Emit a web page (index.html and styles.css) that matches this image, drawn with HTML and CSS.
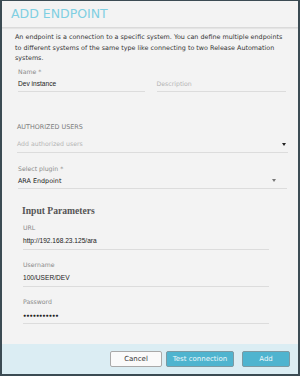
FILE: index.html
```html
<!DOCTYPE html>
<html lang="en">
<head>
    <meta charset="UTF-8">
    <title>Add Endpoint</title>
    <link rel="stylesheet" href="styles.css">
</head>
<body>
    <div class="dialog">
        <div class="dialog-header">ADD ENDPOINT</div>

        <div class="dialog-body">
            <p class="intro">An endpoint is a connection to a specific system. You can define multiple endpoints to different systems of the same type like connecting to two Release Automation systems.</p>

            <div class="row">
                <div class="field name">
                    <div class="label">Name *</div>
                    <div class="value">Dev instance</div>
                </div>
                <div class="field desc">
                    <div class="label"></div>
                    <div class="value placeholder">Description</div>
                </div>
            </div>

            <div class="section-title">AUTHORIZED USERS</div>
            <div class="field select wide">
                <div class="value placeholder">Add authorized users</div>
                <span class="caret dark"></span>
            </div>

            <div class="field select plugin">
                <div class="label">Select plugin *</div>
                <div class="value strong">ARA Endpoint</div>
                <span class="caret"></span>
            </div>

            <div class="params">
                <h3>Input Parameters</h3>
                <div class="field">
                    <div class="label">URL</div>
                    <div class="value">http://192.168.23.125/ara</div>
                </div>
                <div class="field">
                    <div class="label">Username</div>
                    <div class="value">100/USER/DEV</div>
                </div>
                <div class="field">
                    <div class="label">Password</div>
                    <div class="value dots">&#9679;&#9679;&#9679;&#9679;&#9679;&#9679;&#9679;&#9679;&#9679;&#9679;&#9679;</div>
                </div>
            </div>
        </div>

        <div class="dialog-footer">
            <button class="btn btn-cancel">Cancel</button>
            <button class="btn btn-primary">Test connection</button>
            <button class="btn btn-primary btn-add">Add</button>
        </div>
    </div>
</body>
</html>
```

FILE: styles.css
```css
html, body {
    margin: 0;
    padding: 0;
}
body {
    width: 300px;
    height: 376px;
    background: #3b4b53;
    font-family: "DejaVu Sans", Verdana, sans-serif;
    color: #333;
}
.dialog {
    box-sizing: border-box;
    width: 300px;
    height: 376px;
    border: 2px solid #3b4b53;
    border-top-width: 1px;
    background: #f3f3f3;
    display: flex;
    flex-direction: column;
}
.dialog-header {
    height: 26px;
    line-height: 26px;
    padding-left: 9px;
    font-family: "DejaVu Sans", Verdana, sans-serif;
    font-size: 12.5px;
    color: #7fcfe2;
    border-bottom: 1px solid #dadada;
    box-shadow: 0 1px 1px rgba(0, 0, 0, 0.06);
}
.dialog-body {
    flex: 1;
    padding: 4px 12px 0 13px;
}
.intro {
    margin: 0;
    font-size: 6.4px;
    line-height: 10.5px;
    color: #333;
}
.row {
    display: flex;
    gap: 12px;
    margin-top: 3px;
    padding-left: 3px;
}
.name {
    width: 127px;
}
.desc {
    width: 130px;
}
.field {
    position: relative;
    border-bottom: 1px solid #dcdcdc;
    padding-bottom: 2px;
}
.label {
    height: 12px;
    font-size: 6.2px;
    line-height: 9px;
    color: #8a8a8a;
}
.value {
    font-family: "Liberation Sans", Arial, sans-serif;
    font-size: 6.6px;
    line-height: 10px;
    color: #222;
}
.value.placeholder {
    font-family: "DejaVu Sans", Verdana, sans-serif;
    font-size: 6.2px;
    color: #b5b5b5;
}
.value.strong {
    font-family: "DejaVu Sans", Verdana, sans-serif;
    font-size: 6.4px;
    color: #222;
}
.section-title {
    margin-top: 31px;
    padding-left: 2px;
    font-size: 6.4px;
    color: #7a7a7a;
}
.wide {
    margin-top: 8px;
    margin-left: 2px;
    width: 271px;
    padding-bottom: 3px;
}
.plugin {
    margin-top: 11px;
    margin-left: 3px;
    width: 269px;
}
.caret {
    position: absolute;
    right: 2px;
    bottom: 6px;
    width: 0;
    height: 0;
    border-left: 2.5px solid transparent;
    border-right: 2.5px solid transparent;
    border-top: 3px solid #777;
}
.plugin .caret {
    right: 11px;
    bottom: 6px;
}
.caret.dark {
    border-top-color: #222;
}
.params {
    padding-left: 7px;
    width: 247px;
}
.params h3 {
    margin: 16px 0 7px 0;
    font-family: "Liberation Serif", "Times New Roman", serif;
    font-size: 9.6px;
    font-weight: bold;
    color: #555;
}
.params .field {
    margin-bottom: 10px;
    margin-left: 1px;
    padding-bottom: 3px;
}
.params .label {
    height: 13px;
}
.dots {
    font-size: 5px;
    letter-spacing: 0.2px;
}
.dialog-footer {
    height: 30px;
    background: #dbedf3;
    display: flex;
    justify-content: flex-end;
    align-items: center;
    gap: 4px;
    padding-right: 8px;
}
.btn {
    height: 16px;
    padding: 0;
    font-family: "DejaVu Sans", Verdana, sans-serif;
    font-size: 7px;
    border-radius: 2px;
    cursor: pointer;
}
.btn-cancel {
    width: 52px;
    background: #fafafa;
    border: 1px solid #a9a9a9;
    color: #333;
}
.btn-primary {
    width: 68px;
    background: #4fb4cf;
    border: 1px solid #7d9aa3;
    color: #eef8fb;
}
.btn-add {
    width: 48px;
    margin-left: 4px;
}
```
